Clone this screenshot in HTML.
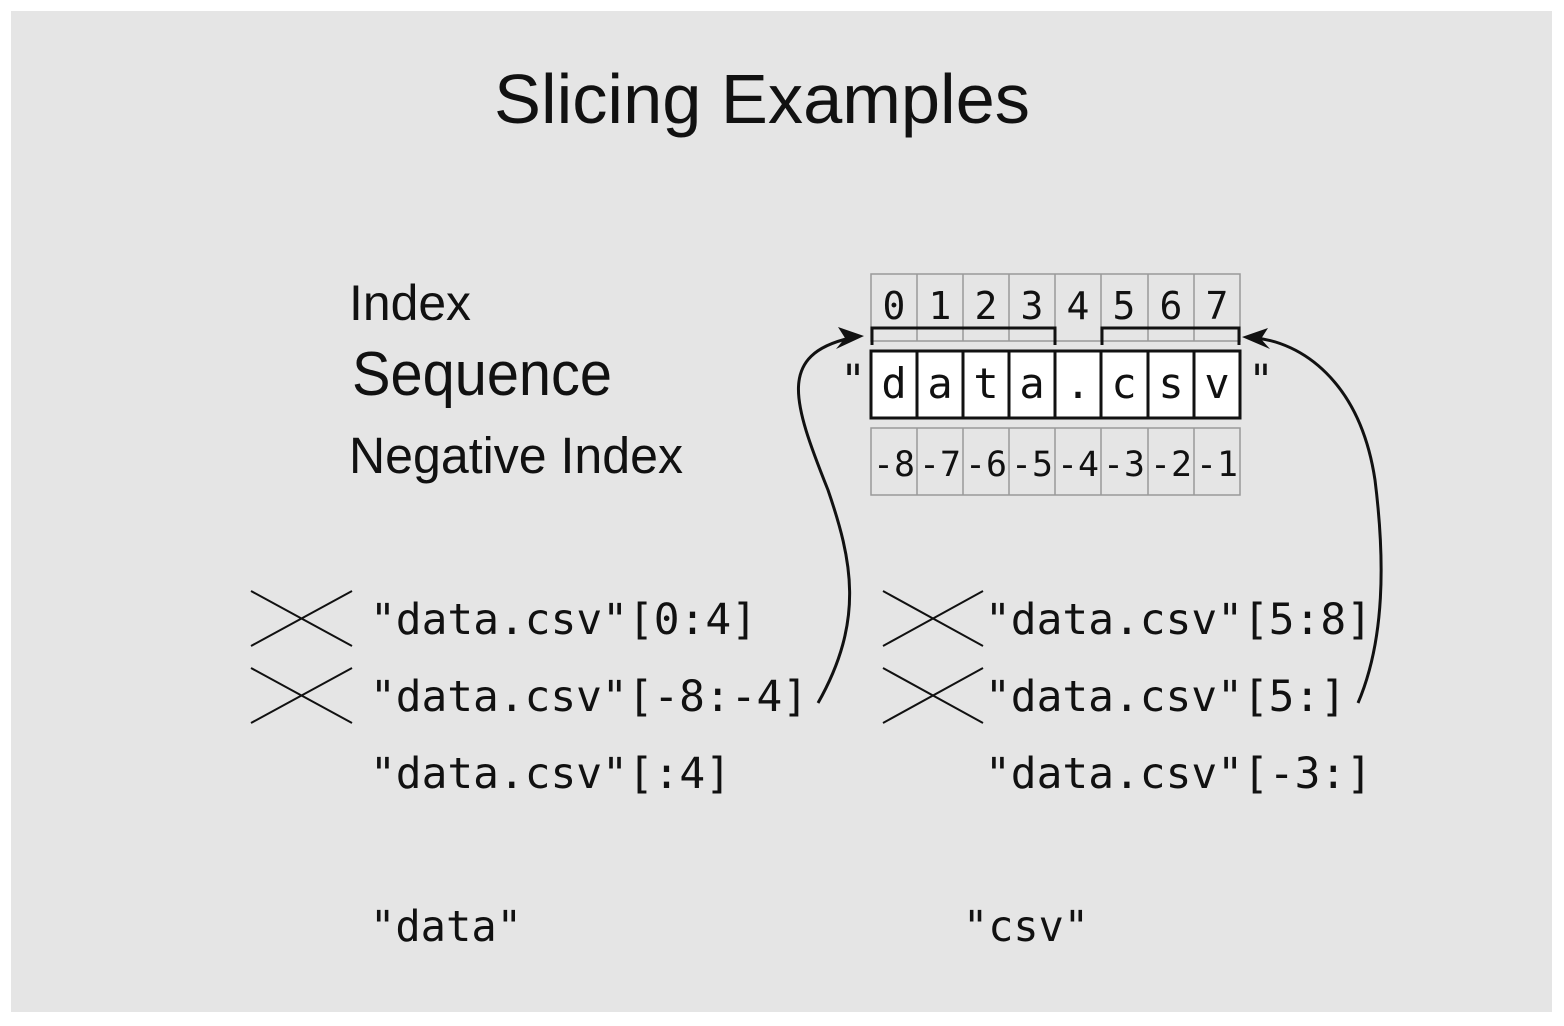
<!DOCTYPE html>
<html><head><meta charset="utf-8"><style>
html,body{margin:0;padding:0;background:#fff;}
svg{display:block;}
</style></head><body>
<svg width="1564" height="1026" viewBox="0 0 1564 1026" xmlns="http://www.w3.org/2000/svg">
<rect x="0" y="0" width="1564" height="1026" fill="#fff"/>
<rect x="11" y="11" width="1541" height="1001" fill="#e5e5e5"/>
<g font-family="Liberation Sans, DejaVu Sans, sans-serif" fill="#111">
<text x="494" y="123" font-size="70" textLength="536" lengthAdjust="spacingAndGlyphs">Slicing Examples</text>
<text x="349" y="320" font-size="50" textLength="122" lengthAdjust="spacingAndGlyphs">Index</text>
<text x="352" y="395" font-size="62" textLength="260" lengthAdjust="spacingAndGlyphs">Sequence</text>
<text x="349" y="473" font-size="51" textLength="334" lengthAdjust="spacingAndGlyphs">Negative Index</text>
</g>
<g stroke="#999" stroke-width="1.5" fill="none">
<rect x="871" y="274" width="369" height="67"/>
<rect x="871" y="428" width="369" height="67"/>
<path d="M917 274V341M963 274V341M1009 274V341M1055 274V341M1101 274V341M1148 274V341M1194 274V341"/>
<path d="M917 428V495M963 428V495M1009 428V495M1055 428V495M1101 428V495M1148 428V495M1194 428V495"/>
</g>
<rect x="871" y="351" width="369" height="67" fill="#fff" stroke="#111" stroke-width="3"/>
<path d="M917 351V418M963 351V418M1009 351V418M1055 351V418M1101 351V418M1148 351V418M1194 351V418" stroke="#111" stroke-width="3"/>
<path d="M872 345V328H1055V345M1102 345V328H1239V345" stroke="#111" stroke-width="3" fill="none"/>
<g font-family="DejaVu Sans Mono, Liberation Mono, monospace" fill="#111" text-anchor="middle">
<g font-size="38">
<text x="894" y="319">0</text><text x="940" y="319">1</text><text x="986" y="319">2</text><text x="1032" y="319">3</text><text x="1078" y="319">4</text><text x="1124" y="319">5</text><text x="1171" y="319">6</text><text x="1217" y="319">7</text>
</g>
<g font-size="42">
<text x="894" y="398">d</text><text x="940" y="398">a</text><text x="986" y="398">t</text><text x="1032" y="398">a</text><text x="1078" y="398">.</text><text x="1124" y="398">c</text><text x="1171" y="398">s</text><text x="1217" y="398">v</text>
<text x="853" y="394">"</text><text x="1261" y="394">"</text>
</g>
<g font-size="35">
<text x="894" y="476" textLength="42" lengthAdjust="spacingAndGlyphs">-8</text><text x="940" y="476" textLength="42" lengthAdjust="spacingAndGlyphs">-7</text><text x="986" y="476" textLength="42" lengthAdjust="spacingAndGlyphs">-6</text><text x="1032" y="476" textLength="42" lengthAdjust="spacingAndGlyphs">-5</text><text x="1078" y="476" textLength="42" lengthAdjust="spacingAndGlyphs">-4</text><text x="1124" y="476" textLength="42" lengthAdjust="spacingAndGlyphs">-3</text><text x="1171" y="476" textLength="42" lengthAdjust="spacingAndGlyphs">-2</text><text x="1217" y="476" textLength="42" lengthAdjust="spacingAndGlyphs">-1</text>
</g>
</g>
<g font-family="DejaVu Sans Mono, Liberation Mono, monospace" fill="#111" font-size="43">
<text x="370" y="634" textLength="387" lengthAdjust="spacingAndGlyphs">"data.csv"[0:4]</text>
<text x="370" y="711" textLength="438" lengthAdjust="spacingAndGlyphs">"data.csv"[-8:-4]</text>
<text x="370" y="788" textLength="361" lengthAdjust="spacingAndGlyphs">"data.csv"[:4]</text>
<text x="370" y="941" textLength="152" lengthAdjust="spacingAndGlyphs">"data"</text>
<text x="985" y="634" textLength="387" lengthAdjust="spacingAndGlyphs">"data.csv"[5:8]</text>
<text x="985" y="711" textLength="361" lengthAdjust="spacingAndGlyphs">"data.csv"[5:]</text>
<text x="985" y="788" textLength="387" lengthAdjust="spacingAndGlyphs">"data.csv"[-3:]</text>
<text x="963" y="941" textLength="126" lengthAdjust="spacingAndGlyphs">"csv"</text>
</g>
<g stroke="#111" stroke-width="2" fill="none">
<path d="M251 591L352 646M251 646L352 591"/>
<path d="M251 668L352 723M251 723L352 668"/>
<path d="M883 591L983 646M883 646L983 591"/>
<path d="M883 668L983 723M883 723L983 668"/>
</g>
<g stroke="#111" stroke-width="3" fill="none">
<path d="M818 703C865 620 852 560 828 490C792 400 778 355 850 338"/>
<path d="M1358 703C1385 640 1385 560 1375 480C1360 380 1300 342 1255 338"/>
</g>
<path d="M864 336L838 327L845 338L836 349Z" fill="#111"/>
<path d="M1242 337L1268 328L1261 339L1270 349Z" fill="#111"/>
</svg>
</body></html>
